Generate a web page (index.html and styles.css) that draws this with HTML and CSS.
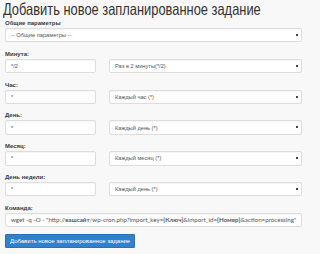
FILE: index.html
```html
<!DOCTYPE html>
<html lang="ru">
<head>
  <meta charset="UTF-8">
  <meta name="viewport" content="width=device-width, initial-scale=1.0">
  <title>Добавить новое запланированное задание</title>
  <link rel="stylesheet" href="styles.css">
</head>
<body>

<h1>Добавить новое запланированное задание</h1>

<form class="cron-form">
  <div class="group">
    <label>Общие параметры</label>
    <div class="select-wrap full">
      <select><option>-- Общие параметры --</option></select>
    </div>
  </div>

  <div class="group">
    <label>Минута:</label>
    <div class="row">
      <input type="text" value="*/2">
      <div class="select-wrap">
        <select><option>Раз в 2 минуты(*/2)</option></select>
      </div>
    </div>
  </div>

  <div class="group">
    <label>Час:</label>
    <div class="row">
      <input type="text" value="*">
      <div class="select-wrap">
        <select><option>Каждый час (*)</option></select>
      </div>
    </div>
  </div>

  <div class="group">
    <label>День:</label>
    <div class="row">
      <input type="text" value="*">
      <div class="select-wrap">
        <select><option>Каждый день (*)</option></select>
      </div>
    </div>
  </div>

  <div class="group">
    <label>Месяц:</label>
    <div class="row">
      <input type="text" value="*">
      <div class="select-wrap">
        <select><option>Каждый месяц (*)</option></select>
      </div>
    </div>
  </div>

  <div class="group">
    <label>День недели:</label>
    <div class="row">
      <input type="text" value="*">
      <div class="select-wrap">
        <select><option>Каждый день (*)</option></select>
      </div>
    </div>
  </div>

  <div class="group">
    <label>Команда:</label>
    <div class="command">wget -q -O - "http://<b>вашсайт</b>/wp-cron.php?import_key=<b>{Ключ}</b>&amp;import_id=<b>{Номер}</b>&amp;action=processing"</div>
  </div>

  <button type="button" class="btn">Добавить новое запланированное задание</button>
</form>

</body>
</html>
```

FILE: styles.css
```css
body {
  margin: 0;
  padding: 0 18px 0 5px;
  background-color: #f8f8f8;
  font-family: "Liberation Sans", Arial, sans-serif;
  color: #333;
}

h1 {
  margin: 0 0 0 -2px;
  font-size: 16.5px;
  font-weight: normal;
  line-height: 19px;
  color: #333;
  white-space: nowrap;
  transform: scaleX(0.78);
  transform-origin: left center;
}

.group {
  margin-bottom: 7.4px;
}

label {
  display: block;
  font-size: 6px;
  font-weight: bold;
  line-height: 8px;
  margin-bottom: 1px;
  color: #3a3a3a;
}

/* filas con campo + desplegable */
.row {
  display: flex;
  gap: 13px;
}

input,
select,
.command {
  box-sizing: border-box;
  height: 14.4px;
  border: 1px solid #ddd;
  border-radius: 2px;
  background-color: #fff;
  font-family: "Liberation Sans", Arial, sans-serif;
  font-size: 5.7px;
  color: #555;
  padding: 0 5px;
  outline: none;
  box-shadow: inset 0 1px 1px rgba(0, 0, 0, 0.04);
}

.row input {
  width: 91px;
  flex: none;
}

.select-wrap {
  position: relative;
  flex: 1;
}

.select-wrap select {
  appearance: none;
  width: 100%;
  display: block;
}

.select-wrap::after {
  content: "";
  position: absolute;
  right: 4px;
  top: 6px;
  width: 2px;
  height: 2px;
  background-color: #444;
}

.command {
  line-height: 12.4px;
  white-space: nowrap;
  overflow: hidden;
  font-family: Lato, sans-serif;
  font-size: 6.2px;
  padding: 0 5px;
}

.command b {
  font-weight: bold;
}

.btn {
  display: block;
  margin-top: -0.4px;
  height: 14px;
  padding: 0 4px;
  border: 1px solid #2a72b5;
  border-radius: 1px;
  background-color: #3080cc;
  color: #fff;
  font-family: "Liberation Sans", Arial, sans-serif;
  font-size: 6px;
}
```
